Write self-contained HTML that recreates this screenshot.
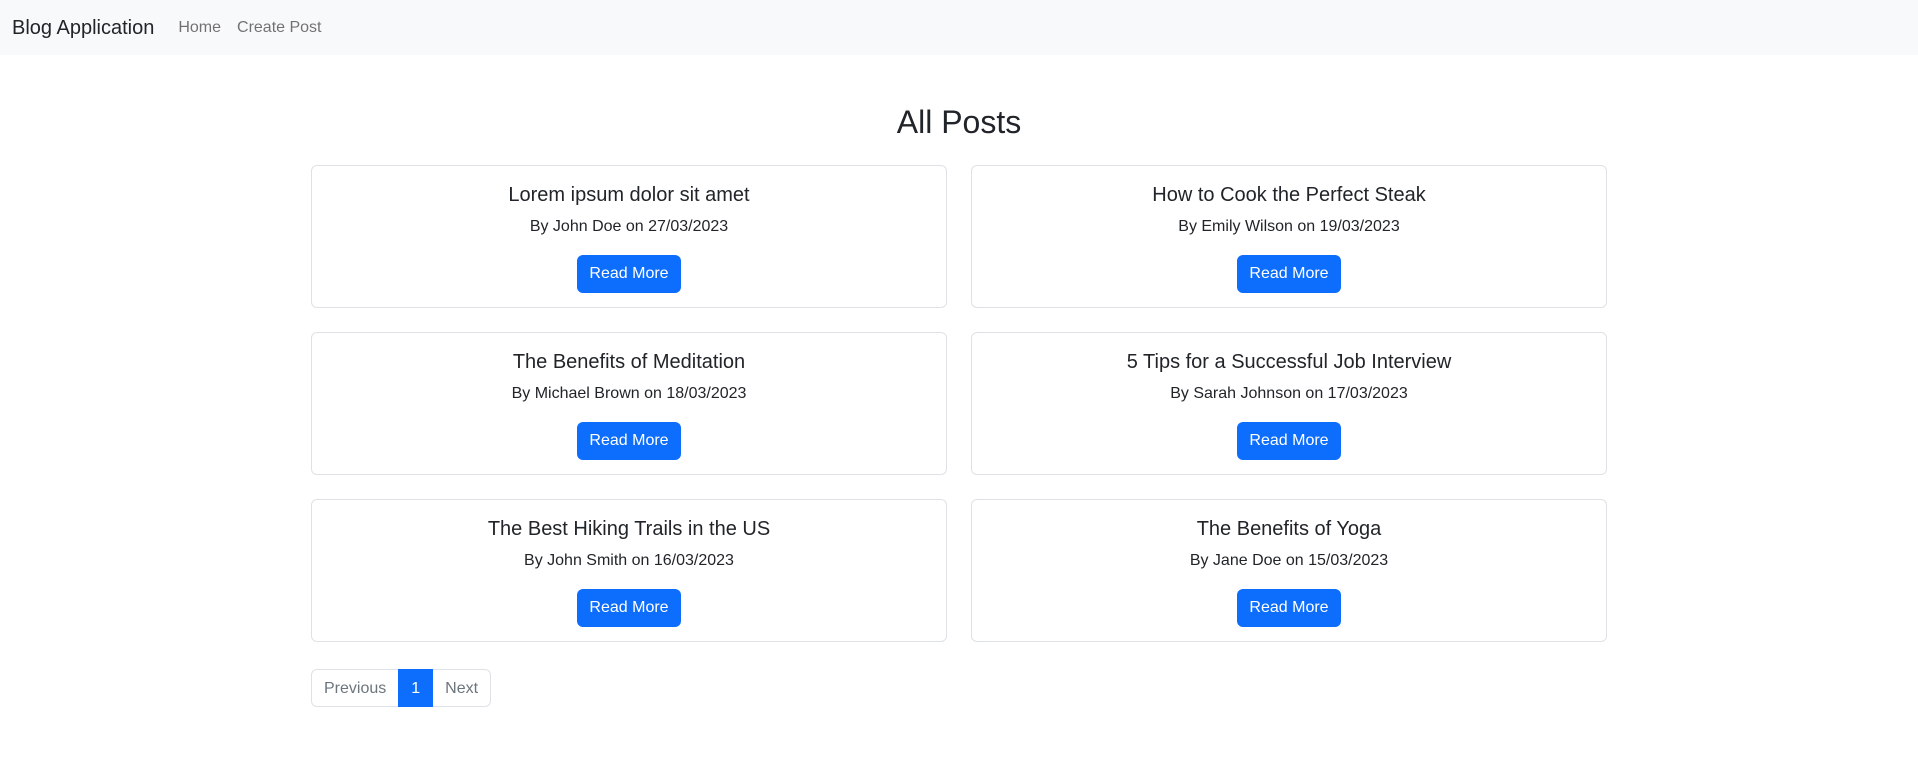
<!DOCTYPE html>
<html><head><meta charset="utf-8"><style>
*{box-sizing:border-box;margin:0;padding:0}
body{width:1918px;height:760px;font-family:"Liberation Sans",sans-serif;font-size:16px;line-height:1.5;color:#212529;background:#fff;overflow:hidden}
nav{height:55px;background:#f8f9fa;display:flex;align-items:center;padding:0 12px}
.brand{font-size:20px;margin-right:16px;color:#212529}
.nl{color:rgba(0,0,0,.55);padding:0 8px;font-size:16px}
.container{width:1320px;margin:0 auto;padding:0 12px}
h2{font-size:32px;font-weight:500;line-height:1.2;text-align:center;margin:48px 0 24px;height:38px}
.row{display:flex;flex-wrap:wrap;margin:0 -12px}
.col{width:50%;padding:0 12px;margin-bottom:24px}
.card{border:1px solid #dee2e6;border-radius:6px;padding:17px 16px 16px;text-align:center;height:143px}
.card h5{font-size:20px;font-weight:500;line-height:1.2;margin-bottom:8px;height:24px}
.card p{margin-bottom:16px}
.btn{display:inline-block;background:#0d6efd;color:#fff;border-radius:6px;padding:7px 12px 5px;height:38px;line-height:24px}
.pg{display:flex;margin-top:3px}
.pg span{border:1px solid #dee2e6;padding:7px 12px 5px;line-height:24px;color:#6c757d;margin-left:-1px}
.pg span:first-child{border-radius:6px 0 0 6px;margin-left:0}
.pg span:last-child{border-radius:0 6px 6px 0}
.pg .a{background:#0d6efd;border-color:#0d6efd;color:#fff;position:relative}
</style></head><body>
<nav><span class="brand">Blog Application</span><span class="nl">Home</span><span class="nl">Create Post</span></nav>
<div class="container">
<h2>All Posts</h2>
<div class="row">
<div class="col"><div class="card"><h5>Lorem ipsum dolor sit amet</h5><p>By John Doe on 27/03/2023</p><span class="btn">Read More</span></div></div>
<div class="col"><div class="card"><h5>How to Cook the Perfect Steak</h5><p>By Emily Wilson on 19/03/2023</p><span class="btn">Read More</span></div></div>
<div class="col"><div class="card"><h5>The Benefits of Meditation</h5><p>By Michael Brown on 18/03/2023</p><span class="btn">Read More</span></div></div>
<div class="col"><div class="card"><h5>5 Tips for a Successful Job Interview</h5><p>By Sarah Johnson on 17/03/2023</p><span class="btn">Read More</span></div></div>
<div class="col"><div class="card"><h5>The Best Hiking Trails in the US</h5><p>By John Smith on 16/03/2023</p><span class="btn">Read More</span></div></div>
<div class="col"><div class="card"><h5>The Benefits of Yoga</h5><p>By Jane Doe on 15/03/2023</p><span class="btn">Read More</span></div></div>
</div>
<div class="pg"><span>Previous</span><span class="a">1</span><span>Next</span></div>
</div>
</body></html>
